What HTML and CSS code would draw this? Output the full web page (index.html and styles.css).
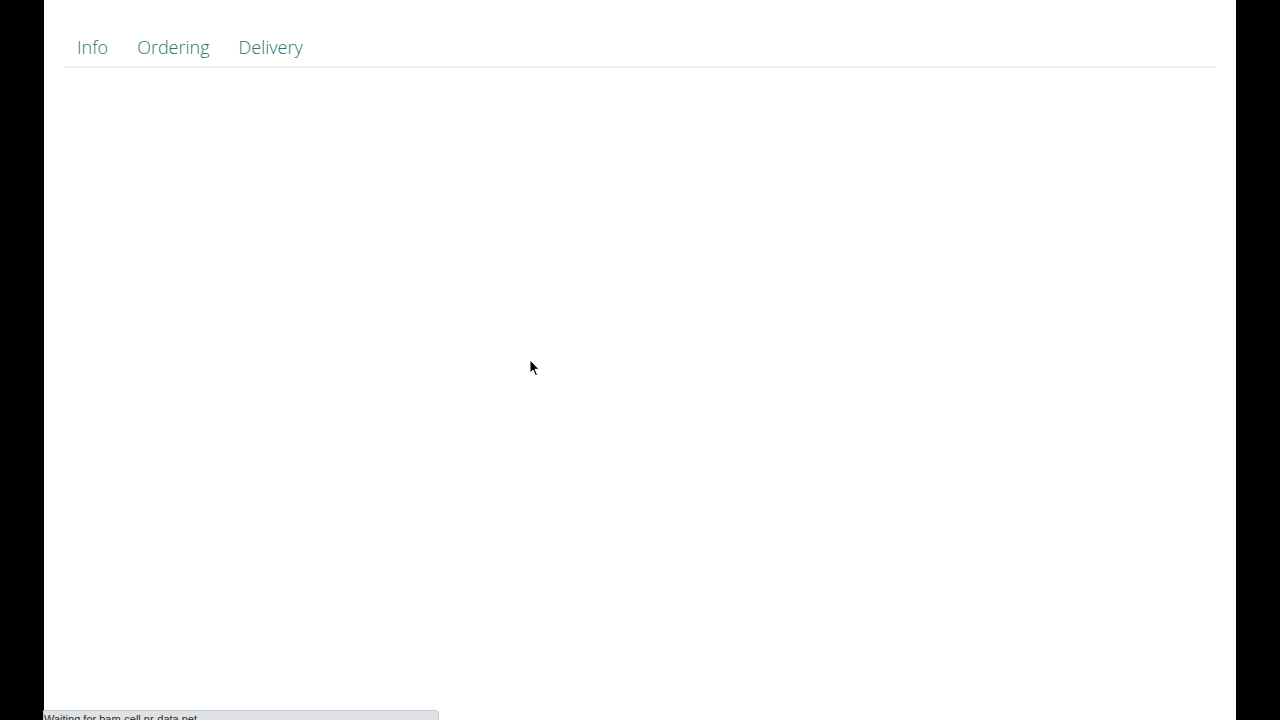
FILE: index.html
```html
<!DOCTYPE html>
<html lang="en">
<head>
<meta charset="utf-8">
<title>Info</title>
<link rel="stylesheet" href="styles.css">
</head>
<body>
<div class="page">
  <nav class="tabs">
    <a class="tab" href="#">Info</a>
    <a class="tab" href="#">Ordering</a>
    <a class="tab" href="#">Delivery</a>
  </nav>
  <div class="content"></div>
  <div class="status">Waiting for bam-cell.nr-data.net</div>
  <svg class="cursor" width="12" height="18" viewBox="0 0 12 18"><path d="M1 1 L1 14 L4 11 L6.5 16.5 L8.5 15.6 L6 10.3 L10 10.3 Z" fill="#000" stroke="#fff" stroke-width="1"/></svg>
</div>
</body>
</html>
```
FILE: styles.css
```css
html, body {
  margin: 0;
  padding: 0;
  background: #000;
  height: 720px;
  overflow: hidden;
}
.page {
  position: relative;
  width: 1192px;
  height: 720px;
  margin-left: 44px;
  background: #fff;
  font-family: "Open Sans", "Liberation Sans", sans-serif;
}
.tabs {
  display: flex;
  margin: 0 20px;
  padding-top: 25px;
  border-bottom: 2px solid #ececec;
}
.tab {
  display: block;
  padding: 10px 15px 7px 13px;
  font-size: 18px;
  line-height: 24px;
  font-weight: 300;
  color: #22796e;
  text-decoration: none;
  margin-right: 1px;
}
.status {
  position: absolute;
  left: -1px;
  top: 710px;
  width: 396px;
  height: 20px;
  box-sizing: border-box;
  padding: 2px 0 0 0;
  background: #dfe2e5;
  border: 1px solid #c4c7cb;
  border-radius: 0 4px 0 0;
  font-family: "Liberation Sans", sans-serif;
  font-size: 11px;
  line-height: 13px;
  color: #2b2b2b;
  white-space: nowrap;
  overflow: hidden;
}
.cursor {
  position: absolute;
  left: 485px;
  top: 359px;
}
```
